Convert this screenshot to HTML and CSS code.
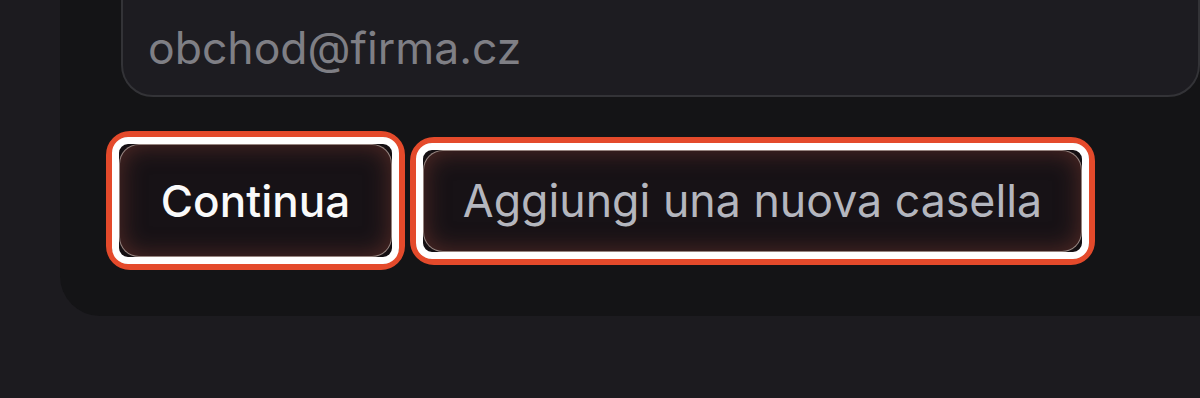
FILE: index.html
```html
<!DOCTYPE html>
<html lang="it">
<head>
<meta charset="utf-8">
<link rel="stylesheet" href="styles.css">
</head>
<body>
  <div class="card">
    <div class="field">
      <input class="input" type="email" placeholder="obchod@firma.cz">
    </div>
    <div class="actions">
      <div class="ring">
        <div class="ring-inner">
          <button class="btn btn-primary">Continua</button>
        </div>
      </div>
      <div class="ring">
        <div class="ring-inner">
          <button class="btn btn-secondary">Aggiungi una nuova casella</button>
        </div>
      </div>
    </div>
  </div>
</body>
</html>
```

FILE: styles.css
```css
html, body {
  margin: 0;
  padding: 0;
  background: #1c1b1f;
  font-family: Inter, "Noto Sans", sans-serif;
  overflow: hidden;
}

.card {
  margin-left: 60px;
  margin-top: -60px;
  padding: 0 0 46px 61px;
  background: #141416;
  border-radius: 0 0 0 40px;
}

.field {
  display: flex;
}

.input {
  box-sizing: border-box;
  width: 1200px;
  height: 157px;
  padding: 58px 0 0 25px;
  background: #1d1c21;
  border: 2px solid #333337;
  border-radius: 32px;
  font-family: Inter, "Noto Sans", sans-serif;
  font-size: 44.5px;
  color: #e4e4e7;
  outline: none;
}

.input::placeholder {
  color: #7f7f85;
}

.actions {
  display: flex;
  align-items: center;
  gap: 5px;
  margin-top: 34px;
  margin-left: -15px;
}

.ring {
  border: 6px solid #e44a2b;
  border-radius: 24px;
}

.ring-inner {
  border: 7px solid #ffffff;
  border-radius: 16px;
  background: #140f12;
  display: flex;
}

.btn {
  box-sizing: border-box;
  margin: 0;
  border: 1px solid rgba(255, 225, 215, 0.55);
  border-radius: 20px;
  background: #171216;
  box-shadow: inset 0 0 24px rgba(125, 58, 48, 0.6);
  font-family: Inter, "Noto Sans", sans-serif;
  padding: 0 30px;
  cursor: pointer;
  white-space: nowrap;
}

.btn-primary {
  width: 273px;
  height: 113px;
  color: #fafafa;
  font-size: 44px;
  font-weight: 500;
}

.btn-secondary {
  width: 659px;
  height: 102px;
  color: #b4b6be;
  font-size: 44.7px;
  font-weight: 400;
}
```
